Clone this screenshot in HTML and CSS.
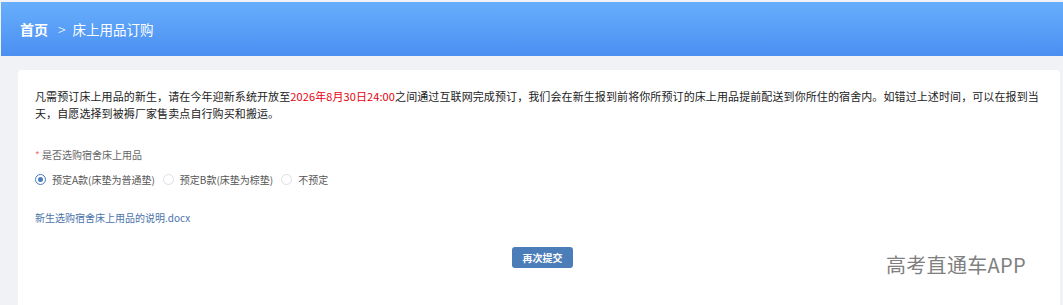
FILE: index.html
```html
<!DOCTYPE html>
<html lang="zh">
<head>
<meta charset="utf-8">
<link rel="stylesheet" href="styles.css">
</head>
<body>
<div class="page">
  <header class="topbar">
    <span class="crumb-home">首页</span>
    <span class="crumb-sep">&gt;</span>
    <span class="crumb-cur">床上用品订购</span>
  </header>
  <main class="card">
    <p class="intro">凡需预订床上用品的新生，请在今年迎新系统开放至<span class="red">2026年8月30日24:00</span>之间通过互联网完成预订，我们会在新生报到前将你所预订的床上用品提前配送到你所住的宿舍内。如错过上述时间，可以在报到当天，自愿选择到被褥厂家售卖点自行购买和搬运。</p>
    <div class="field-label"><span class="star">*</span> 是否选购宿舍床上用品</div>
    <div class="radios">
      <label class="radio"><span class="dot checked"></span>预定A款(床垫为普通垫)</label>
      <label class="radio"><span class="dot"></span>预定B款(床垫为棕垫)</label>
      <label class="radio"><span class="dot"></span>不预定</label>
    </div>
    <a class="doc-link">新生选购宿舍床上用品的说明.docx</a>
    <div class="actions"><button class="btn">再次提交</button></div>
  </main>
  <div class="watermark">高考直通车APP</div>
</div>
</body>
</html>
```
FILE: styles.css
```css
* { box-sizing: border-box; }
html, body { margin: 0; padding: 0; }
body {
  width: 1063px;
  height: 305px;
  overflow: hidden;
  background: #f0f2f5;
  font-family: "Noto Sans CJK SC", "Liberation Sans", sans-serif;
}
.page { position: relative; padding-top: 2px; height: 305px; overflow: hidden; }
.topbar {
  margin-left: 1px;
  height: 54px;
  background: linear-gradient(180deg, #67aefc 0%, #4b8ff1 100%);
  display: flex;
  align-items: center;
  padding-left: 19px;
  color: #fff;
  font-size: 14px;
}
.crumb-home { font-weight: bold; }
.crumb-sep { margin: 0 7px 0 10px; font-size: 14px; font-weight: 300; }
.crumb-cur { font-size: 13.5px; }
.card {
  margin: 14px 3px 0 18px;
  background: #fff;
  border-radius: 4px;
  height: 260px;
  padding: 18px 17px 0 17px;
}
.intro {
  margin: 0;
  font-size: 11px;
  letter-spacing: 0.1px;
  line-height: 17px;
  color: #222;
}
.red { color: #e8000b; }
.field-label {
  margin-top: 26px;
  font-size: 10px;
  color: #666;
  line-height: 14px;
}
.star { color: #f56c6c; }
.radios {
  margin-top: 10px;
  display: flex;
  align-items: center;
  font-size: 10px;
  color: #555;
}
.radio { display: flex; align-items: center; margin-right: 8px; }
.dot {
  width: 11px; height: 11px;
  border: 1px solid #dcdfe6;
  border-radius: 50%;
  margin-right: 6px;
  position: relative;
}
.dot.checked { border-color: #4a7dbf; }
.dot.checked::after {
  content: "";
  position: absolute;
  left: 2px; top: 2px;
  width: 5px; height: 5px;
  border-radius: 50%;
  background: #4a7dbf;
}
.doc-link {
  display: block;
  margin-top: 23px;
  font-size: 10px;
  color: #4a73aa;
}
.actions { display: flex; justify-content: center; margin-top: 22px; }
.btn {
  border: 0;
  width: 61px;
  height: 21px;
  border-radius: 3px;
  background: #4b7db9;
  color: #fff;
  font-size: 10px;
  font-weight: bold;
  font-family: inherit;
  padding: 0;
  margin-left: 7px;
}
.watermark {
  position: absolute;
  left: 886px;
  top: 250px;
  font-size: 20px;
  color: #7f7f7f;
  letter-spacing: 0.3px;
  text-shadow: 0 0 2px #fff;
}
```
